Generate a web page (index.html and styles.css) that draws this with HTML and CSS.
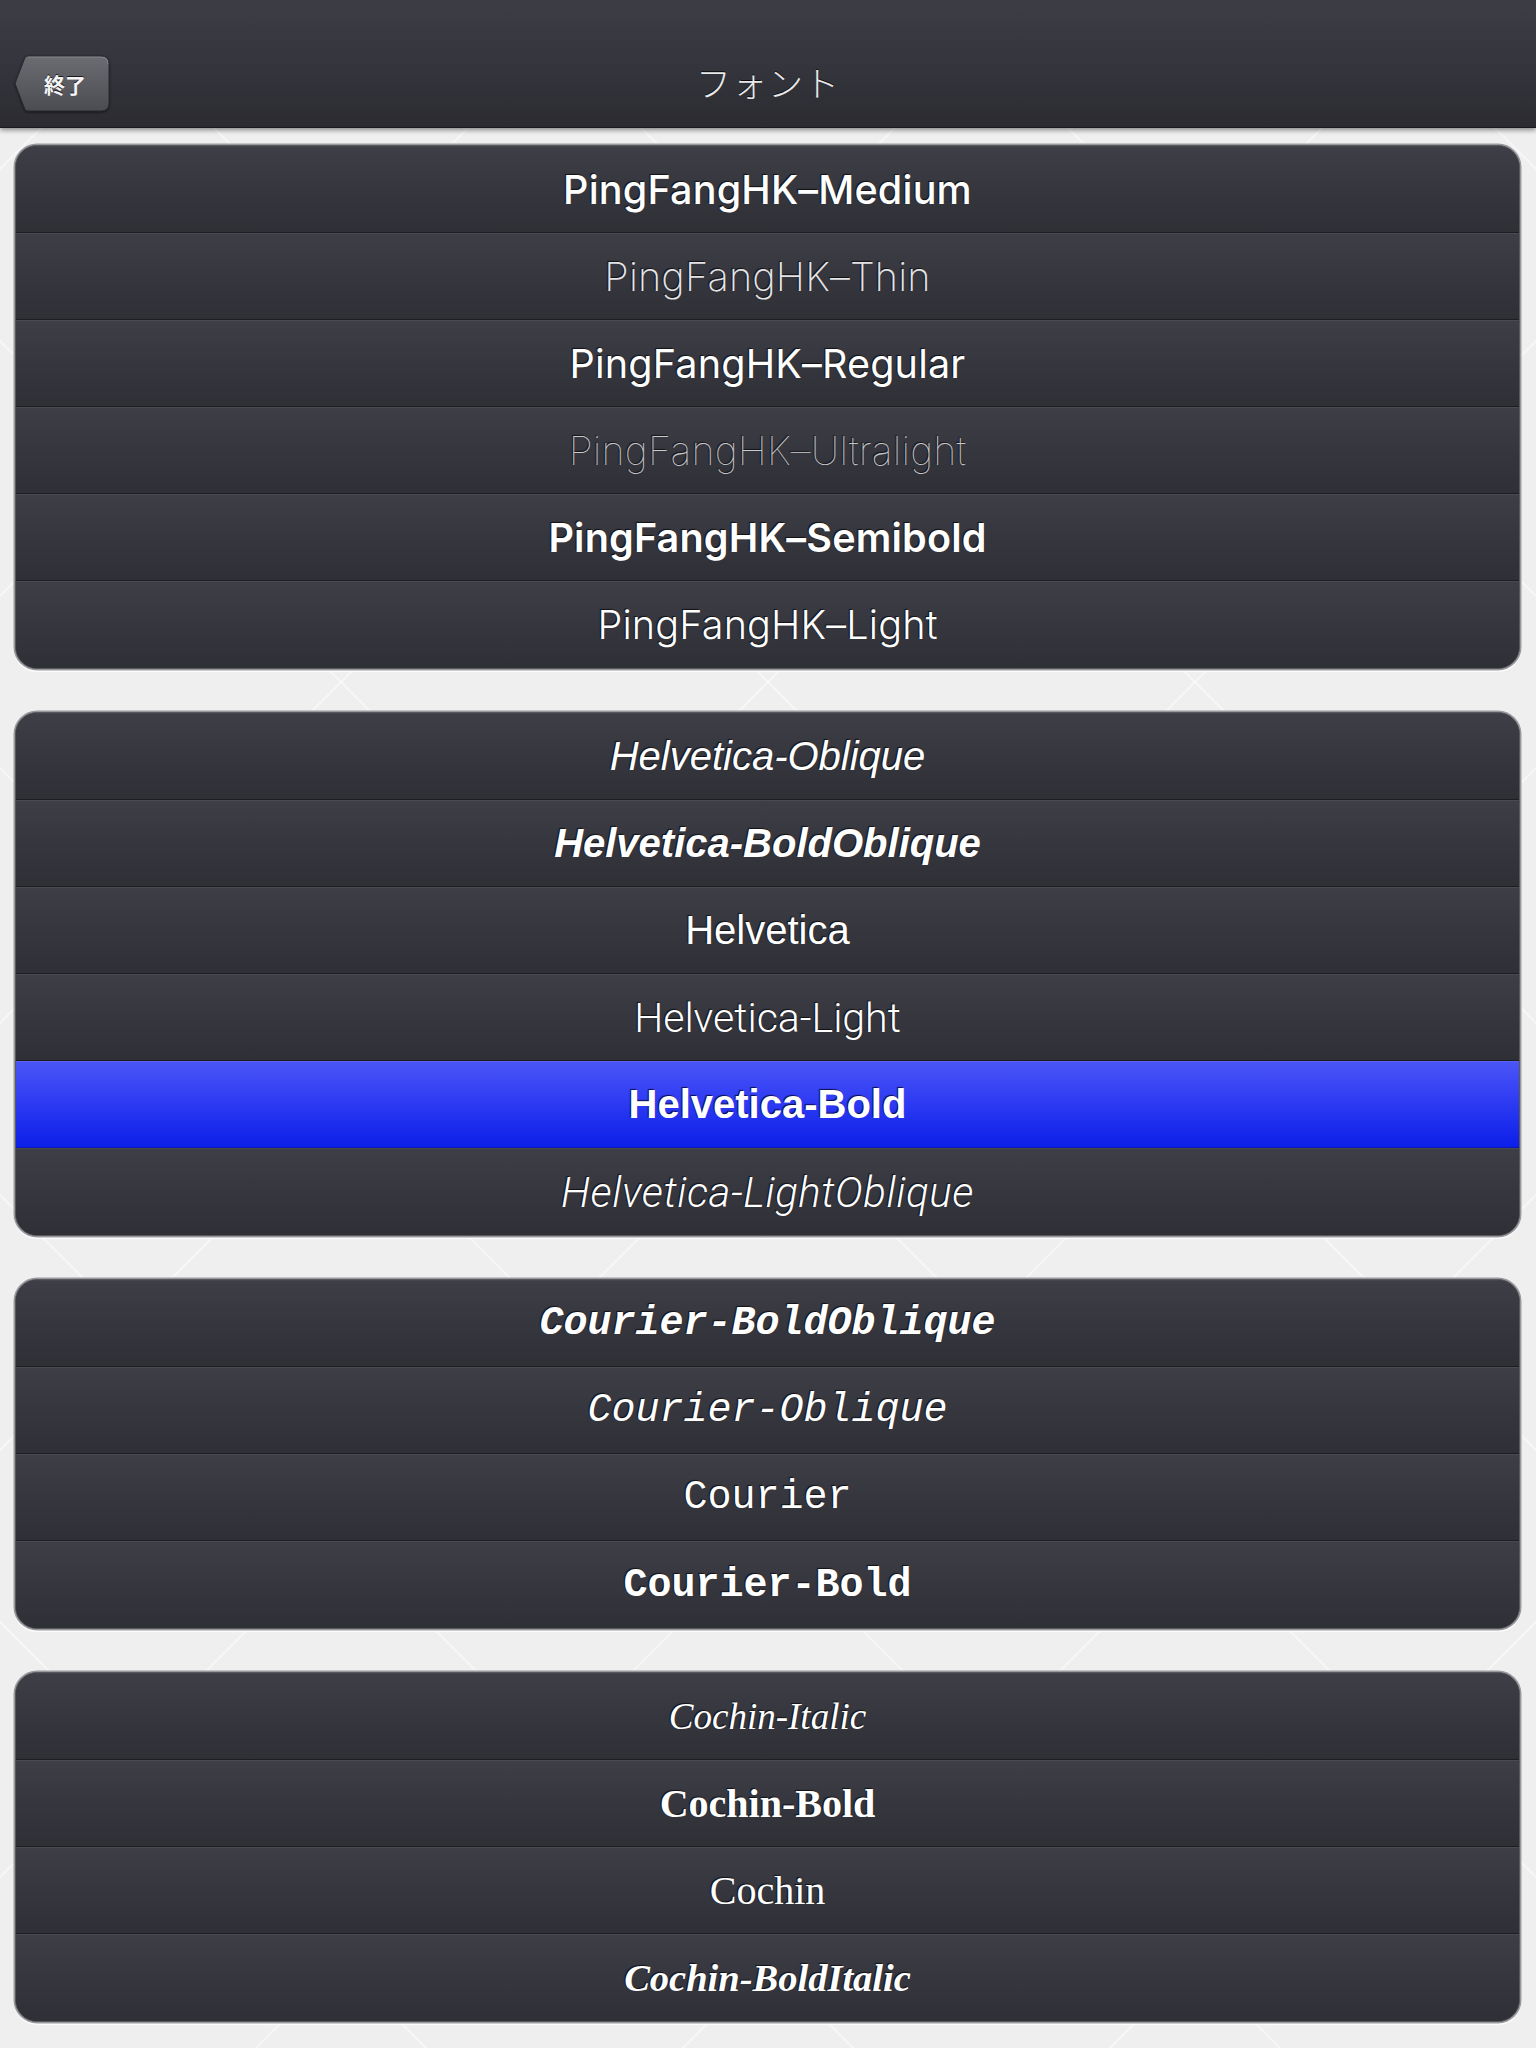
FILE: index.html
```html
<!DOCTYPE html>
<html lang="ja">
<head>
<meta charset="utf-8">
<title>フォント</title>
<link rel="stylesheet" href="styles.css">
</head>
<body>
<header class="navbar">
  <div class="nav-side">
    <button class="back" type="button">
      <svg class="back-shape" viewBox="0 0 96 58" aria-hidden="true">
        <defs>
          <linearGradient id="bg" x1="0" y1="0" x2="0" y2="1">
            <stop offset="0" stop-color="#6c6c73"/>
            <stop offset="1" stop-color="#4b4b52"/>
          </linearGradient>
        </defs>
        <path d="M14,1 H87 Q95,1 95,9 V48 Q95,56 87,56 H14 Q12,56 11,54.5 L1.6,30 Q0.8,28.5 1.6,27 L11,2.5 Q12,1 14,1 Z" fill="url(#bg)" stroke="#2b2b31" stroke-width="1"/>
        <path d="M14,2 H87 Q94,2 94,9" fill="none" stroke="rgba(255,255,255,0.18)" stroke-width="1"/>
      </svg>
      <span class="back-label">終了</span>
    </button>
  </div>
  <h1 class="title">フォント</h1>
  <div class="nav-side"></div>
</header>

<main class="content">
  <ul class="group">
    <li class="row pf pf-medium">PingFangHK–Medium</li>
    <li class="row pf pf-thin">PingFangHK–Thin</li>
    <li class="row pf pf-regular">PingFangHK–Regular</li>
    <li class="row pf pf-ultralight">PingFangHK–Ultralight</li>
    <li class="row pf pf-semibold">PingFangHK–Semibold</li>
    <li class="row pf pf-light">PingFangHK–Light</li>
  </ul>

  <ul class="group">
    <li class="row hv hv-oblique">Helvetica-Oblique</li>
    <li class="row hv hv-boldoblique">Helvetica-BoldOblique</li>
    <li class="row hv hv-regular">Helvetica</li>
    <li class="row hv hv-light">Helvetica-Light</li>
    <li class="row hv hv-bold selected">Helvetica-Bold</li>
    <li class="row hv hv-lightoblique">Helvetica-LightOblique</li>
  </ul>

  <ul class="group">
    <li class="row cr cr-boldoblique">Courier-BoldOblique</li>
    <li class="row cr cr-oblique">Courier-Oblique</li>
    <li class="row cr cr-regular">Courier</li>
    <li class="row cr cr-bold">Courier-Bold</li>
  </ul>

  <ul class="group">
    <li class="row co co-italic">Cochin-Italic</li>
    <li class="row co co-bold">Cochin-Bold</li>
    <li class="row co co-regular">Cochin</li>
    <li class="row co co-bolditalic">Cochin-BoldItalic</li>
  </ul>
</main>
</body>
</html>
```

FILE: styles.css
```css
* {
  box-sizing: border-box;
}

html, body {
  margin: 0;
  padding: 0;
}

body {
  width: 1536px;
  min-height: 2048px;
  background-color: #efeff0;
  background-image:
    repeating-linear-gradient(45deg, transparent 0 300px, rgba(255,255,255,0.45) 300px 302px),
    repeating-linear-gradient(-45deg, transparent 0 300px, rgba(255,255,255,0.45) 300px 302px);
  font-family: "Liberation Sans", Arial, sans-serif;
  overflow: hidden;
}

/* ---------- Navigation bar ---------- */
.navbar {
  position: relative;
  z-index: 2;
  height: 128px;
  padding-top: 40px;
  display: grid;
  grid-template-columns: 1fr auto 1fr;
  align-items: center;
  background: linear-gradient(to bottom, #3d3d46 0%, #34343c 55%, #2b2b31 100%);
  border-bottom: 1px solid #1a1a1e;
  box-shadow: 0 2px 5px rgba(0,0,0,0.45);
}

.nav-side {
  display: flex;
  align-items: center;
  height: 88px;
}

.back {
  position: relative;
  margin-left: 14px;
  width: 96px;
  height: 58px;
  padding: 0 0 0 6px;
  border: 0;
  background: none;
  display: flex;
  align-items: center;
  justify-content: center;
  cursor: pointer;
}

.back-shape {
  position: absolute;
  inset: 0;
  width: 96px;
  height: 58px;
  filter: drop-shadow(0 1px 1px rgba(0,0,0,0.55));
}

.back-label {
  position: relative;
  font-family: "Noto Sans CJK JP", "Noto Sans CJK SC", sans-serif;
  font-weight: 700;
  font-size: 21px;
  color: #f4f4f4;
  text-shadow: 0 -1px 0 rgba(0,0,0,0.75);
}

.title {
  margin: 0 0 6px;
  font-family: "Noto Sans CJK JP", "Noto Sans CJK SC", sans-serif;
  font-weight: 300;
  font-size: 35px;
  color: #e9e9ea;
  text-shadow: 0 -1px 0 rgba(0,0,0,0.8);
  letter-spacing: 1px;
}

/* ---------- Content ---------- */
.content {
  padding: 17px 16px 0 15px;
  display: flex;
  flex-direction: column;
  gap: 43px;
}

.group {
  list-style: none;
  margin: 0;
  padding: 0;
  border: 1px solid #58585d;
  border-radius: 22px;
  overflow: hidden;
  box-shadow: 0 0 0 1.5px #9a9a9e, 0 2px 1px 1px rgba(255,255,255,0.9);
  background: #34343c;
}

.row {
  height: 87px;
  display: flex;
  align-items: center;
  justify-content: center;
  color: #ffffff;
  background: linear-gradient(to bottom, #3e3e47 0%, #36363e 50%, #2f2f36 100%);
  border-top: 1px solid #4a4a53;
  border-bottom: 1px solid #1d1d22;
  text-shadow: -1px -1px 1px rgba(0,0,0,0.7);
  white-space: nowrap;
}

.row:first-child {
  border-top-color: #45454d;
}

.row:last-child {
  border-bottom: 0;
}

.row.selected {
  background: linear-gradient(to bottom, #4a55f6 0%, #2f3cf3 45%, #0c1fe9 100%);
  border-top: 1px solid #5862f4;
  border-bottom: 1px solid #0a17b8;
  text-shadow: -1px -1px 1px rgba(0,0,30,0.8);
}

/* PingFang family substitutes */
.pf {
  font-family: Inter, "Noto Sans", sans-serif;
  font-size: 39.5px;
  letter-spacing: 0.2px;
}
.pf-medium { font-weight: 500; }
.pf-thin { font-weight: 200; color: #e4e4e6; }
.pf-regular { font-weight: 400; }
.pf-ultralight { font-weight: 100; color: #c9c9cc; }
.pf-semibold { font-weight: 600; }
.pf-light { font-weight: 300; }

/* Helvetica family substitutes */
.hv {
  font-family: "Liberation Sans", Arial, sans-serif;
  font-size: 40px;
}
.hv-oblique { font-style: italic; font-weight: 400; }
.hv-boldoblique { font-style: italic; font-weight: 700; }
.hv-regular { font-weight: 400; }
.hv-light { font-family: Roboto, "Liberation Sans", sans-serif; font-weight: 300; font-size: 41px; }
.hv-bold { font-weight: 700; }
.hv-lightoblique { font-family: Roboto, "Liberation Sans", sans-serif; font-weight: 300; font-style: italic; font-size: 42px; letter-spacing: 0.6px; }

/* Courier family substitutes */
.cr {
  font-family: "Liberation Mono", "Courier New", monospace;
  font-size: 40px;
}
.cr-boldoblique { font-weight: 700; font-style: italic; }
.cr-oblique { font-style: italic; }
.cr-regular { font-weight: 400; }
.cr-bold { font-weight: 700; }

/* Cochin family substitutes */
.co {
  font-family: "Liberation Serif", "Times New Roman", serif;
  font-size: 40px;
}
.co-italic { font-style: italic; font-size: 37px; }
.co-bold { font-weight: 700; }
.co-regular { font-weight: 400; }
.co-bolditalic { font-weight: 700; font-style: italic; font-size: 38.5px; }
```
